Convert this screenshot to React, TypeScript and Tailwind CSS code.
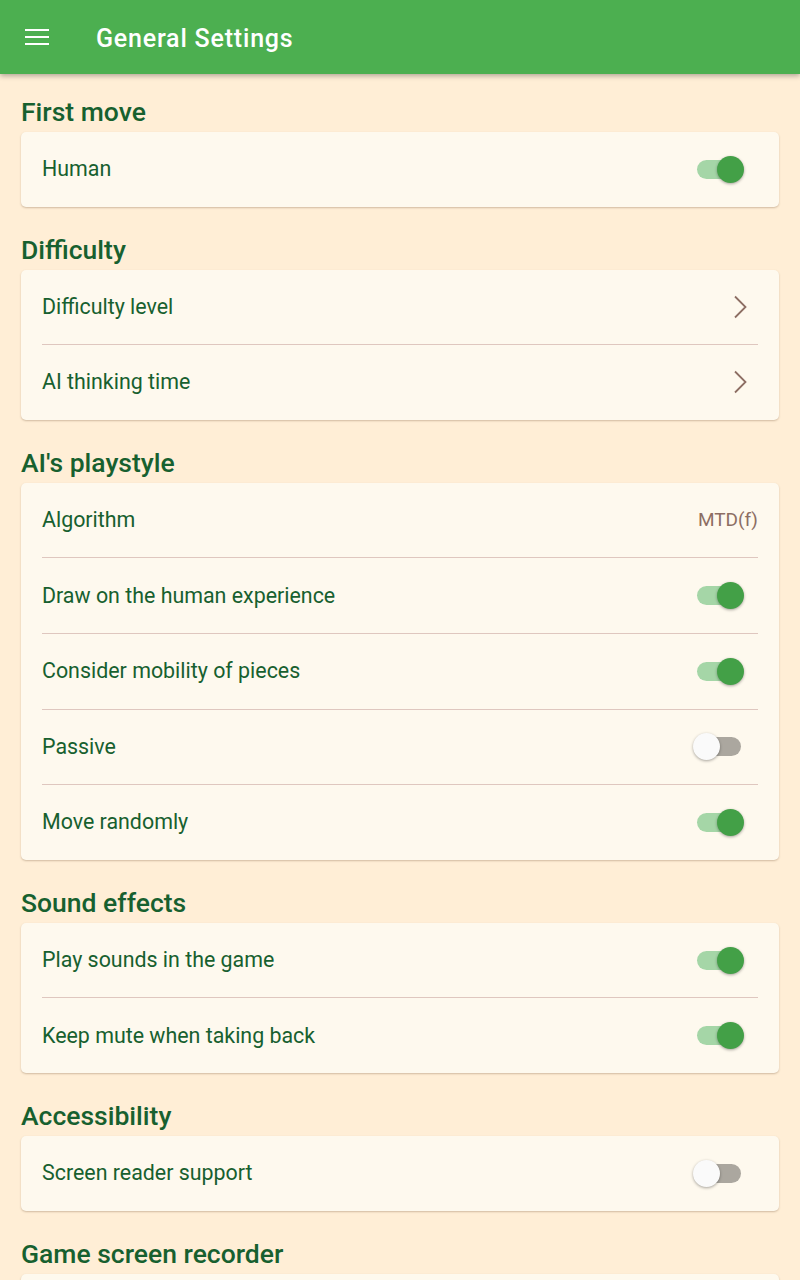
import React from 'react';

type Row =
  | { label: string; kind: 'switch'; on: boolean }
  | { label: string; kind: 'chevron' }
  | { label: string; kind: 'value'; value: string }
  | { label: string; kind: 'blank' };

interface Section {
  title: string;
  rows: Row[];
}

const sections: Section[] = [
  { title: 'First move', rows: [{ label: 'Human', kind: 'switch', on: true }] },
  {
    title: 'Difficulty',
    rows: [
      { label: 'Difficulty level', kind: 'chevron' },
      { label: 'AI thinking time', kind: 'chevron' },
    ],
  },
  {
    title: "AI's playstyle",
    rows: [
      { label: 'Algorithm', kind: 'value', value: 'MTD(f)' },
      { label: 'Draw on the human experience', kind: 'switch', on: true },
      { label: 'Consider mobility of pieces', kind: 'switch', on: true },
      { label: 'Passive', kind: 'switch', on: false },
      { label: 'Move randomly', kind: 'switch', on: true },
    ],
  },
  {
    title: 'Sound effects',
    rows: [
      { label: 'Play sounds in the game', kind: 'switch', on: true },
      { label: 'Keep mute when taking back', kind: 'switch', on: true },
    ],
  },
  {
    title: 'Accessibility',
    rows: [{ label: 'Screen reader support', kind: 'switch', on: false }],
  },
  // only the top edge of this card is on screen
  { title: 'Game screen recorder', rows: [{ label: '', kind: 'blank' }] },
];

const Toggle = ({ on }: { on: boolean }) => (
  <div className="relative w-[52px] h-[27px] mr-[13px] flex items-center">
    <div className={`mx-[4px] h-[19px] flex-1 rounded-full ${on ? 'bg-[#a5d6a7]' : 'bg-[#aba79f]'}`} />
    <div
      className={`absolute top-0 w-[27px] h-[27px] rounded-full shadow-[0_1px_3px_rgba(0,0,0,0.35)] ${
        on ? 'left-[24px] bg-[#43a047]' : 'left-0 bg-[#fafafa]'
      }`}
    />
  </div>
);

const Chevron = () => (
  <svg width="24" height="24" viewBox="0 0 24 24" className="mr-[6px]">
    <path d="M7 1.5 L17.5 12 L7 22.5" fill="none" stroke="#8d6e63" strokeWidth="1.8" />
  </svg>
);

const SettingRow = ({ row }: { row: Row }) => (
  <div className="h-[74.6px] flex items-center justify-between">
    <span className="text-[21.4px] text-[#17602f]">{row.label}</span>
    {row.kind === 'switch' && <Toggle on={row.on} />}
    {row.kind === 'chevron' && <Chevron />}
    {row.kind === 'value' && <span className="text-[19px] text-[#8d6e63]">{row.value}</span>}
  </div>
);

export default function App() {
  return (
    <div
      className="w-[800px] h-[1280px] overflow-hidden bg-[#ffeed6]"
      style={{ fontFamily: 'Roboto, "Noto Sans", sans-serif' }}
    >
      <header className="relative z-10 h-[74px] bg-[#4caf50] flex items-center shadow-[0_2px_5px_rgba(0,0,0,0.3)]">
        <div className="w-[96px] pl-[25px]">
          <div className="w-[24px] flex flex-col gap-[4.5px]">
            <div className="h-[2.5px] bg-white" />
            <div className="h-[2.5px] bg-white" />
            <div className="h-[2.5px] bg-white" />
          </div>
        </div>
        <h1 className="pt-[4px] text-[25px] font-medium tracking-[0.8px] text-white">General Settings</h1>
      </header>

      <main className="px-[21px] pt-[18px]">
        {sections.map((s, i) => (
          <section key={s.title} className={i === 0 ? '' : 'mt-[23px]'}>
            <h2 className="h-[40px] flex items-center text-[26.5px] font-medium text-[#17602f]">{s.title}</h2>
            <div className="bg-[#fef9ee] rounded-[5px] shadow-[0_1px_2px_rgba(120,90,60,0.35)] px-[21px]">
              {s.rows.map((r, j) => (
                <div key={r.label || j}>
                  {j > 0 && <div className="h-px bg-[#dfc7bf]" />}
                  <SettingRow row={r} />
                </div>
              ))}
            </div>
          </section>
        ))}
      </main>
    </div>
  );
}
